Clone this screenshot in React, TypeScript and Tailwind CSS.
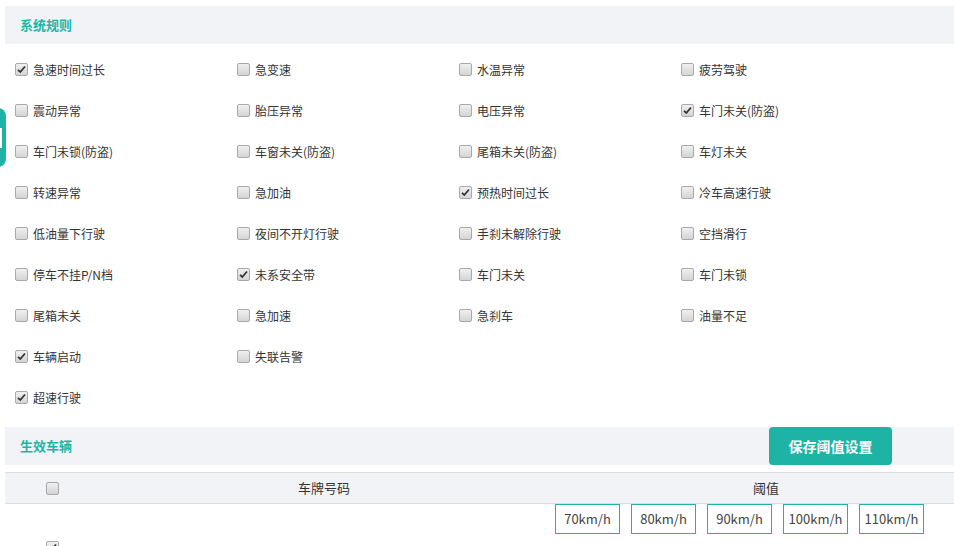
import React from "react";

const font = { fontFamily: '"Microsoft YaHei", "Noto Sans CJK SC", "Liberation Sans", sans-serif' };

const rules: [string, boolean][] = [
  ["急速时间过长", true],
  ["急变速", false],
  ["水温异常", false],
  ["疲劳驾驶", false],
  ["震动异常", false],
  ["胎压异常", false],
  ["电压异常", false],
  ["车门未关(防盗)", true],
  ["车门未锁(防盗)", false],
  ["车窗未关(防盗)", false],
  ["尾箱未关(防盗)", false],
  ["车灯未关", false],
  ["转速异常", false],
  ["急加油", false],
  ["预热时间过长", true],
  ["冷车高速行驶", false],
  ["低油量下行驶", false],
  ["夜间不开灯行驶", false],
  ["手刹未解除行驶", false],
  ["空挡滑行", false],
  ["停车不挂P/N档", false],
  ["未系安全带", true],
  ["车门未关", false],
  ["车门未锁", false],
  ["尾箱未关", false],
  ["急加速", false],
  ["急刹车", false],
  ["油量不足", false],
  ["车辆启动", true],
  ["失联告警", false],
  ["", false],
  ["", false],
  ["超速行驶", true],
];

const speeds = ["70km/h", "80km/h", "90km/h", "100km/h", "110km/h"];

function Box({ checked }: { checked: boolean }) {
  return (
    <span className="inline-flex h-[13px] w-[13px] shrink-0 items-center justify-center rounded-[2px] border border-[#a9a9a9] bg-gradient-to-b from-[#f0f0f0] to-[#d4d4d4]">
      {checked && (
        <svg width="9" height="9" viewBox="0 0 9 9">
          <path d="M1 4.8 L3.3 7 L8 1.5" fill="none" stroke="#333" strokeWidth="1.8" />
        </svg>
      )}
    </span>
  );
}

function SectionBar({ title, children }: { title: string; children?: React.ReactNode }) {
  return (
    <div className="ml-[5px] flex h-[38px] items-center justify-between bg-[#f2f3f7] pl-[15px] pr-[62px]">
      <span className="text-[13px] font-bold text-[#1fb5a6]">{title}</span>
      {children}
    </div>
  );
}

export default function App() {
  return (
    <div className="relative h-[546px] w-[954px] overflow-hidden bg-white text-[#333]" style={font}>
      <div className="absolute left-[-4px] top-[108px] flex h-[59px] w-[10px] items-center rounded-r-[8px] bg-[#1db3a5]">
        <div className="ml-[4px] h-[20px] w-[2px] bg-white" />
      </div>

      <div className="pt-[6px]">
        <SectionBar title="系统规则" />

        <div className="grid grid-cols-[222px_222px_222px_222px] pl-[15px] pt-[5px]">
          {rules.map(([label, checked], i) => (
            <div key={i} className="flex h-[41px] items-center gap-[5px]">
              {label && (
                <>
                  <Box checked={checked} />
                  <span className="text-[12px]">{label}</span>
                </>
              )}
            </div>
          ))}
        </div>

        <div className="mt-[9px]">
          <SectionBar title="生效车辆">
            <button className="h-[38px] w-[123px] rounded-[4px] bg-[#1db3a5] text-[14px] font-bold text-white">
              保存阈值设置
            </button>
          </SectionBar>
        </div>

        <div className="ml-[5px] mt-[7px]">
          <div className="grid h-[32px] grid-cols-[94px_450px_1fr] items-center border-y border-[#dcdde1] bg-[#f2f3f7] text-[13px]">
            <div className="flex justify-center">
              <Box checked={false} />
            </div>
            <div className="text-center">车牌号码</div>
            <div className="pl-[29px] text-center">阈值</div>
          </div>
          <div className="grid grid-cols-[94px_450px_1fr]">
            <div className="flex justify-center pt-[37px]">
              <Box checked={true} />
            </div>
            <div className="pt-[38px] text-center text-[13px] leading-[18px]">川A12345</div>
            <div className="flex flex-col gap-[8px] pl-[6px]">
              <div className="flex gap-[11px]">
                {speeds.map((s) => (
                  <div
                    key={s}
                    className="flex h-[30px] w-[65px] items-center justify-center border border-[#1db3a5] text-[13px] text-[#444]"
                  >
                    {s}
                  </div>
                ))}
              </div>
              <div className="h-[60px]" />
            </div>
          </div>
        </div>
      </div>
    </div>
  );
}
